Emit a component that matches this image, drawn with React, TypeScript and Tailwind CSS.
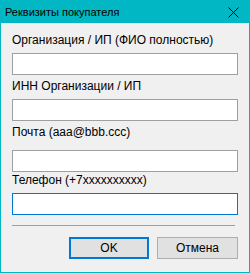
import React from "react";

function Field({ focused, className = "" }: { focused?: boolean; className?: string }) {
  return (
    <div
      className={
        "h-[22px] w-[226px] bg-white border " +
        (focused ? "border-[#0078d7] " : "border-[#a0a0a0] ") +
        className
      }
    />
  );
}

export default function App() {
  return (
    <div className="w-[250px] h-[273px] flex flex-col bg-[#00b7c3] text-[12px] text-black font-['Liberation_Sans',Arial,sans-serif]">
      <div className="h-[23px] flex items-center justify-between pl-[5px] pr-[11px] shrink-0">
        <span className="text-[11px] leading-[15px] mt-[1px]">Реквизиты покупателя</span>
        <svg width="11" height="11" viewBox="0 0 11 11" className="mt-[1px]">
          <path d="M0.5 0.5 L10.5 10.5 M10.5 0.5 L0.5 10.5" stroke="#000" strokeWidth="1" />
        </svg>
      </div>
      <div className="flex-1 mx-[1px] mb-[1px] bg-[#f0f0f0] flex flex-col pl-[11px] pt-[10px]">
        <div className="leading-[15px] h-[15px]">Организация / ИП (ФИО полностью)</div>
        <Field className="mt-[5px]" />
        <div className="leading-[15px] h-[15px] mt-[4px]">ИНН Организации / ИП</div>
        <Field className="mt-[5px]" />
        <div className="leading-[15px] h-[15px] mt-[4px]">Почта (aaa@bbb.ccc)</div>
        <Field className="mt-[10px]" />
        <div className="leading-[15px] h-[15px] mt-[1px]">Телефон (+7xxxxxxxxxx)</div>
        <Field focused className="mt-[5px]" />
        <div className="mt-[10px] h-[1px] w-[223px] bg-[#a0a0a0]" />
        <div className="mt-[11px] flex justify-end gap-[8px] pr-[11px]">
          <button className="w-[80px] h-[22px] bg-[#e1e1e1] border-2 border-[#0078d7] flex items-center justify-center leading-[15px]">
            OK
          </button>
          <button className="w-[81px] h-[22px] bg-[#e1e1e1] border border-[#adadad] flex items-center justify-center leading-[15px]">
            Отмена
          </button>
        </div>
      </div>
    </div>
  );
}
